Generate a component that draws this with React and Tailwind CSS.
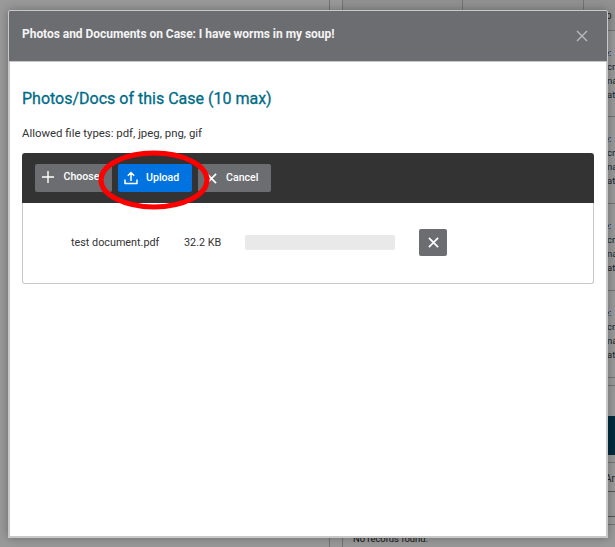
import React from "react";

const rowText = ["e:", "cr", "na", "at"];

function CloseGlyph({ className, width = 1.5 }) {
  return (
    <svg viewBox="0 0 12 12" className={className} fill="none" stroke="currentColor" strokeWidth={width}>
      <path d="M1 1 11 11M11 1 1 11" />
    </svg>
  );
}

function CasePage() {
  return (
    <div className="flex h-full w-full bg-[#999]">
      <div className="h-full w-[330px] shrink-0 border-r border-[#737373]" />
      <div className="ml-3 flex min-w-0 grow flex-col">
        <div className="h-[386px] shrink-0 border-b border-l border-[#737373]">
          <div className="flex h-[31px] border-b border-[#737373] bg-[#919191]">
            <div className="w-[120px] shrink-0 border-r border-[#737373]" />
            <div className="w-[121px] shrink-0 border-r border-[#737373]" />
            <div className="pl-[22px] pt-2 text-[10px] leading-4 text-[#222]">p</div>
          </div>
          {[0, 1, 2, 3].map((row) => (
            <div key={row} className="h-[87px] border-b border-[#737373] pl-[264px] pt-[15px] text-[9.5px] leading-[14px] [&:nth-child(2)]:h-[86px]">
              {rowText.map((text, i) => (
                <div key={text} className={i === 0 ? "-ml-[3px] text-[#000066]" : "whitespace-nowrap text-[#222]"}>{text}</div>
              ))}
            </div>
          ))}
        </div>
        <div className="h-[131px] shrink-0 border-b border-l border-[#555]">
          <div className="h-[30px]" />
          <div className="h-[39px] bg-[#002b3c]" />
          <div className="h-2 border-b border-[#737373]" />
          <div className="flex h-[29px] items-center border-b border-[#555] pl-[262px] pt-0.5 text-[10px] text-[#222]">Ar</div>
        </div>
        <div className="mt-[7px] grow border-l border-t border-[#737373] pl-[10px] pt-[6px] text-[9.4px] leading-4 text-[#111]">No records found.</div>
      </div>
    </div>
  );
}

function UploadIcon() {
  return (
    <svg viewBox="0 0 14 14" className="h-[14px] w-[14px]" fill="none" stroke="currentColor" strokeWidth="1.5" strokeLinejoin="round">
      <path d="M1 8.5V12.5H13V8.5M7 10V1.5M3.8 4.7 7 1.5 10.2 4.7" />
    </svg>
  );
}

function FileUpload() {
  return (
    <div className="mt-[11px] h-[131px]">
      <div className="flex h-[50px] gap-[6px] rounded-t-[3px] bg-[#333] pl-[13px] pt-[11px] text-[10.6px] font-medium text-white">
        <button className="flex h-7 w-[77px] items-center rounded-[2px] bg-[#6c6d71] pb-[2px] pl-[7px]">
          <svg viewBox="0 0 12 12" className="-mt-px h-3 w-3" fill="none" stroke="currentColor" strokeWidth="1.4">
            <path d="M6 0V12M0 6H12" />
          </svg>
          <span className="ml-[9.5px]">Choose</span>
        </button>
        <button className="flex h-7 w-[74px] items-center rounded-[2px] bg-[#0073e0] pl-[6px]">
          <UploadIcon />
          <span className="ml-2">Upload</span>
        </button>
        <button className="flex h-7 w-[73px] items-center rounded-[2px] bg-[#6c6d71] pl-[8px]">
          <CloseGlyph className="h-[11px] w-[11px]" width={1.8} />
          <span className="ml-[9px]">Cancel</span>
        </button>
      </div>
      <div className="flex h-[81px] items-center rounded-b-[3px] border border-t-0 border-[#c8c8c8] pb-[2px] pl-12 text-[10.8px] text-[#333]">
        <span className="w-[113px] pt-[3px]">test document.pdf</span>
        <span className="w-[61px] pt-[3px]">32.2 KB</span>
        <span className="h-[15px] w-[150px] rounded-[2px] bg-[#e9e9e9]" />
        <button className="ml-6 flex h-[27px] w-7 items-center justify-center rounded-[2px] bg-[#6c6d71] text-white">
          <CloseGlyph className="h-[11px] w-[11px]" width={1.9} />
        </button>
      </div>
    </div>
  );
}

export default function App() {
  return (
    <div className="relative h-[547px] w-[615px] overflow-hidden bg-[#999] font-['Roboto','Liberation_Sans',sans-serif]">
      <CasePage />
      <div className="absolute left-2 top-[10px] flex h-[528px] w-[600px] flex-col rounded-[2px] shadow-[0_0_10px_rgba(0,0,0,0.3)]">
        <div className="flex h-[52px] shrink-0 items-center justify-between rounded-t-[2px] border border-[#c8c8c8] bg-[#6c6d71] pl-[13px] pr-[19px]">
          <h1 className="mb-[5px] text-[12px] font-bold tracking-[-0.04px] text-[#f4f4f4]">Photos and Documents on Case: I have worms in my soup!</h1>
          <CloseGlyph className="h-3 w-3 text-[#b9babc]" width={1.4} />
        </div>
        <div className="grow border-2 border-t-0 border-[#c8c8c8] bg-white px-3 pt-[26px]">
          <h2 className="text-[16px] font-normal leading-[22px] text-[#006b87] [-webkit-text-stroke:0.3px_#006b87]">Photos/Docs of this Case (10 max)</h2>
          <p className="mt-[15px] text-[11.4px] leading-[17px] text-[#333]">Allowed file types: pdf, jpeg, png, gif</p>
          <FileUpload />
        </div>
      </div>
      <svg viewBox="0 0 112 60" className="absolute left-[98px] top-[150px] h-[60px] w-[112px]" fill="none">
        <ellipse cx="56" cy="30" rx="53" ry="27" stroke="#ff0000" strokeWidth="5" />
      </svg>
    </div>
  );
}
